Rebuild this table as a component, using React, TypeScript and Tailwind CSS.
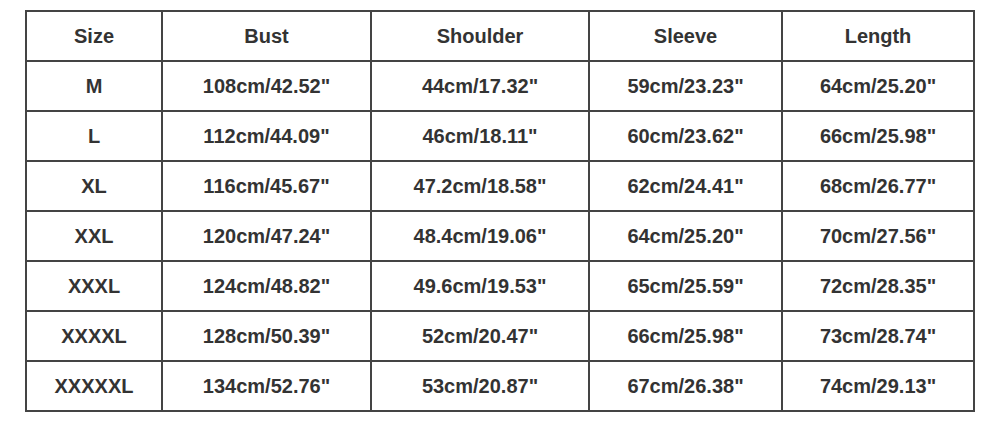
const headers = ["Size", "Bust", "Shoulder", "Sleeve", "Length"]

const rows = [
  ["M", "108cm/42.52\"", "44cm/17.32\"", "59cm/23.23\"", "64cm/25.20\""],
  ["L", "112cm/44.09\"", "46cm/18.11\"", "60cm/23.62\"", "66cm/25.98\""],
  ["XL", "116cm/45.67\"", "47.2cm/18.58\"", "62cm/24.41\"", "68cm/26.77\""],
  ["XXL", "120cm/47.24\"", "48.4cm/19.06\"", "64cm/25.20\"", "70cm/27.56\""],
  ["XXXL", "124cm/48.82\"", "49.6cm/19.53\"", "65cm/25.59\"", "72cm/28.35\""],
  ["XXXXL", "128cm/50.39\"", "52cm/20.47\"", "66cm/25.98\"", "73cm/28.74\""],
  ["XXXXXL", "134cm/52.76\"", "53cm/20.87\"", "67cm/26.38\"", "74cm/29.13\""],
]

export default function App() {
  return (
    <div className="w-[1000px] h-[421px] bg-white pt-[10px] pl-[25px] font-['Liberation_Sans',Arial,sans-serif]">
      <div className="inline-grid grid-cols-[136px_209px_218px_193px_192px] border-l-2 border-t-2 border-[#444]">
        {[headers, ...rows].map((row, i) =>
          row.map((cell, j) => (
            <div
              key={`${i}-${j}`}
              className="h-[50px] border-r-2 border-b-2 border-[#444] flex items-center justify-center text-[20px] font-bold text-[#333]"
            >
              {cell}
            </div>
          ))
        )}
      </div>
    </div>
  )
}
